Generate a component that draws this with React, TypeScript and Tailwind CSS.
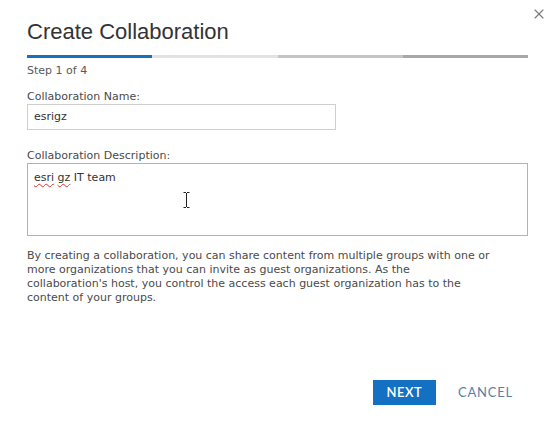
import { X } from 'lucide-react'

const body = { fontFamily: '"DejaVu Sans", Verdana, sans-serif' }

export default function App() {
  return (
    <div className="w-[554px] h-[446px] bg-white relative overflow-hidden">
      <button className="absolute right-[7px] top-[6px] text-[#7a7a7a]">
        <X className="w-[16px] h-[16px]" strokeWidth={1.7} />
      </button>

      <div className="pl-[27px] pr-[26px] pt-[18px]">
        <h1
          className="text-[22px] leading-[28px] text-[#333]"
          style={{ fontFamily: '"Liberation Sans", Arial, sans-serif' }}
        >
          Create Collaboration
        </h1>

        {/* Step progress */}
        <div className="mt-[9px] flex h-[3px]">
          <div className="flex-1 bg-[#1a6fc0]" />
          <div className="flex-1 bg-[#e2e2e2]" />
          <div className="flex-1 bg-[#c4c4c4]" />
          <div className="flex-1 bg-[#a8a8a8]" />
        </div>

        <p className="mt-[6px] text-[11px] leading-[14px] text-[#595959]" style={body}>
          Step 1 of 4
        </p>

        <label className="block mt-[12px] text-[11px] leading-[14px] text-[#4a4a4a]" style={body}>
          Collaboration Name:
        </label>
        <div
          className="w-[309px] h-[26px] border border-[#cfcfcf] flex items-center px-[6px] text-[11px] text-[#333]"
          style={body}
        >
          esrigz
        </div>

        <label className="block mt-[19px] text-[11px] leading-[14px] text-[#4a4a4a]" style={body}>
          Collaboration Description:
        </label>
        <div
          className="h-[73px] border border-[#a7b3d1] px-[6px] pt-[6px] text-[11px] text-[#333] relative"
          style={body}
        >
          <span className="underline decoration-wavy decoration-[#e03030] decoration-1 underline-offset-2">esri</span>{' '}
          <span className="underline decoration-wavy decoration-[#e03030] decoration-1 underline-offset-2">gz</span> IT team
          {/* text cursor */}
          <svg className="absolute left-[155px] top-[28px]" width="7" height="16" viewBox="0 0 7 16">
            <path d="M0.5 0.5h2.5M4 0.5h2.5M3.5 1v14M0.5 15.5h2.5M4 15.5h2.5" stroke="#222" strokeWidth="1" fill="none" />
          </svg>
        </div>

        <p className="mt-[13px] text-[11px] leading-[14px] text-[#4a4a4a]" style={body}>
          By creating a collaboration, you can share content from multiple groups with one or<br />
          more organizations that you can invite as guest organizations. As the<br />
          collaboration's host, you control the access each guest organization has to the<br />
          content of your groups.
        </p>
      </div>

      <div className="absolute left-0 right-0 top-[380px] flex justify-end pr-[41px] gap-[22px] items-center">
        <button
          className="w-[63px] h-[25px] bg-[#1470c2] text-white text-[13px] font-semibold tracking-[0.5px]"
          style={{ fontFamily: 'Lato, sans-serif' }}
        >
          NEXT
        </button>
        <button
          className="text-[#5b7ea6] text-[13px] tracking-[0.8px]"
          style={{ fontFamily: 'Lato, sans-serif' }}
        >
          CANCEL
        </button>
      </div>
    </div>
  )
}
